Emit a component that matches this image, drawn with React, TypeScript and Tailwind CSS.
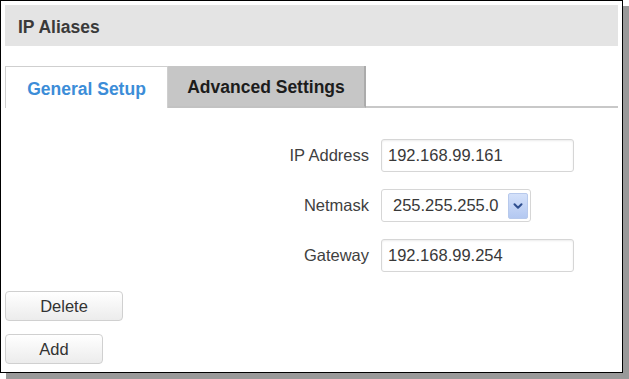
import { ChevronDown } from "lucide-react";

function Field({ label, children }: { label: string; children: React.ReactNode }) {
  return (
    <div className="flex items-center">
      <div className="w-[376px] pr-[12px] text-right text-[16.5px] text-[#404040]">{label}</div>
      {children}
    </div>
  );
}

function TextInput({ value }: { value: string }) {
  return (
    <div className="w-[193px] h-[33px] border border-[#d6d6d6] rounded-[3px] bg-white shadow-[inset_0_1px_2px_rgba(0,0,0,0.08)] flex items-center pl-[6px] text-[16.5px] text-[#383838]">
      {value}
    </div>
  );
}

function Button({ label, width }: { label: string; width: string }) {
  return (
    <button
      className={`${width} h-[30px] border border-[#d0d0d0] rounded-[4px] bg-gradient-to-b from-white to-[#ececec] text-[16.5px] text-[#333] flex items-center justify-center`}
    >
      {label}
    </button>
  );
}

export default function App() {
  return (
    <div className="w-[629px] h-[379px] bg-white" style={{ fontFamily: '"Liberation Sans", Arial, sans-serif' }}>
      <div className="w-[623px] h-[373px] border border-black bg-white shadow-[6px_6px_0_#999] p-[4px] flex flex-col">
        <div className="h-[41px] bg-[#e4e4e4] flex items-center pl-[13px] pt-[3px] text-[17.5px] font-bold text-[#3a3a3a]">
          IP Aliases
        </div>

        <div className="mt-[20px] flex h-[42px]">
          <div className="w-[163px] border-l border-t border-r border-[#cfcfcf] bg-white flex items-center justify-center pt-[3px] text-[17.5px] font-bold text-[#3c8dd8]">
            General Setup
          </div>
          <div className="w-[198px] bg-[#c6c6c6] border-r-2 border-[#ababab] border-b-2 border-b-[#c2c2c2] flex items-center justify-center pt-[3px] text-[17.5px] font-bold text-[#1c1c1c]">
            Advanced Settings
          </div>
          <div className="flex-1 border-b-2 border-[#c8c8c8]" />
        </div>

        <div className="mt-[31px] flex flex-col gap-[17px]">
          <Field label="IP Address">
            <TextInput value="192.168.99.161" />
          </Field>
          <Field label="Netmask">
            <div className="w-[150px] h-[33px] border border-[#d6d6d6] rounded-[3px] bg-white flex items-center justify-between pl-[11px] pr-[2px] text-[16.5px] text-[#383838]">
              <span>255.255.255.0</span>
              <span className="w-[20px] h-[26px] rounded-[2px] border border-[#b7c9ec] bg-gradient-to-b from-[#d4e1fa] to-[#b3c8f1] flex items-center justify-center">
                <ChevronDown size={14} strokeWidth={3.5} color="#2f4f8f" />
              </span>
            </div>
          </Field>
          <Field label="Gateway">
            <TextInput value="192.168.99.254" />
          </Field>
        </div>

        <div className="mt-[19px] flex flex-col gap-[13px]">
          <Button label="Delete" width="w-[118px]" />
          <Button label="Add" width="w-[98px]" />
        </div>
      </div>
    </div>
  );
}
